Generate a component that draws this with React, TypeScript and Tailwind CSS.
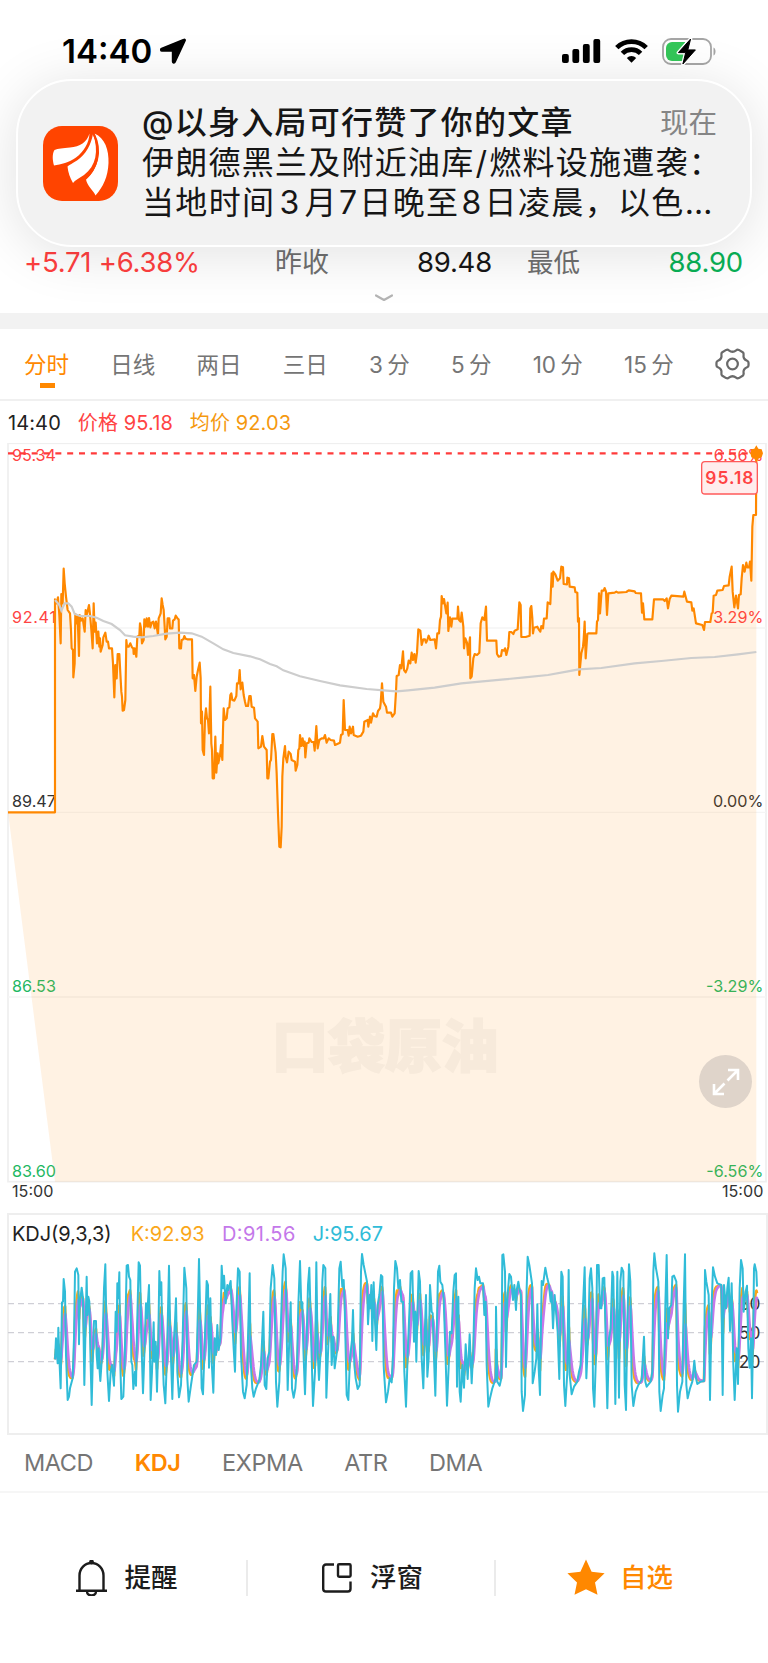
import clsx from 'clsx';

type Point = [number, number];

// Chart series are stored in thirds of a pixel, as "x,y" pairs
const PRICE =
  '24,1147 165,1147 165,508 170,520 174,502 178,555 182,640 184,492 188,520 191,416 194,460 198,500 203,540 210,550 213,600 215,655 219,660 220,742 224,700 226,552 230,580 233,560 237,678 239,555 243,572 248,565 254,605 257,540 261,552 267,525 270,552 274,600 278,655 281,520 284,605 287,578 291,640 295,605 298,650 300,625 302,665 308,645 310,622 316,608 320,635 324,635 327,655 336,655 339,700 343,802 346,705 350,745 353,672 358,672 361,730 364,785 366,800 368,842 372,840 376,810 379,630 381,650 386,650 391,640 396,652 400,655 401,672 404,655 409,680 412,620 418,616 420,580 423,595 426,640 431,630 433,568 437,590 440,565 444,590 447,564 451,592 455,578 460,575 464,595 468,575 474,615 476,565 482,550 485,505 488,525 491,540 494,590 496,628 500,620 503,565 508,565 510,595 517,595 519,572 524,568 527,557 533,566 536,568 538,655 543,655 545,630 550,628 553,618 557,626 562,628 576,628 578,745 582,735 586,783 590,740 594,720 599,698 602,745 603,880 606,845 608,960 612,975 615,865 618,835 621,865 624,870 627,910 631,770 634,940 636,960 638,1045 642,1045 646,920 649,1028 653,970 655,1000 660,975 663,945 667,990 669,900 671,835 675,870 680,865 683,835 688,832 691,795 694,790 697,810 703,812 709,798 711,760 716,760 719,720 722,778 727,758 731,795 735,815 738,828 744,828 748,798 752,798 755,830 762,833 765,865 773,875 775,955 783,950 787,918 792,950 800,960 802,1045 805,1045 810,995 813,990 817,912 820,912 823,935 827,968 830,1030 834,1150 838,1250 842,1252 845,1190 847,1040 850,985 855,948 857,980 861,997 866,965 872,972 875,990 885,995 887,1022 892,1005 895,960 898,955 900,915 904,948 908,925 911,948 914,935 916,982 920,940 926,938 928,925 935,936 941,936 944,962 949,888 953,955 958,930 965,925 971,925 975,915 980,938 986,925 992,930 1002,932 1005,945 1020,938 1023,915 1028,912 1031,810 1035,900 1043,900 1046,917 1049,890 1053,910 1059,890 1061,915 1073,920 1083,917 1090,905 1093,875 1103,870 1105,890 1110,860 1113,878 1119,850 1123,858 1130,860 1134,843 1140,835 1142,820 1146,760 1150,815 1158,830 1161,848 1173,848 1177,860 1184,850 1188,785 1190,738 1196,735 1200,705 1204,715 1209,664 1212,720 1217,727 1222,715 1226,692 1231,700 1235,668 1239,690 1243,672 1247,698 1251,668 1255,598 1261,602 1265,645 1270,628 1275,628 1278,638 1282,630 1286,617 1291,630 1304,628 1308,655 1312,610 1317,610 1320,570 1323,560 1325,498 1329,520 1332,507 1339,550 1343,518 1345,603 1350,562 1354,590 1357,566 1372,566 1374,530 1377,570 1382,575 1385,548 1390,590 1392,655 1396,625 1401,638 1404,675 1410,622 1411,745 1415,740 1420,685 1424,672 1431,675 1438,668 1442,580 1447,562 1453,570 1458,530 1461,632 1489,632 1491,672 1496,680 1503,678 1506,660 1512,662 1515,655 1519,675 1525,650 1528,606 1534,606 1540,612 1544,602 1553,598 1558,517 1562,525 1564,621 1577,621 1589,617 1591,535 1594,528 1597,565 1599,610 1602,593 1612,590 1616,598 1621,605 1624,588 1629,595 1632,566 1640,565 1643,517 1651,522 1655,430 1658,470 1660,425 1666,433 1673,452 1680,445 1684,410 1689,412 1691,462 1701,463 1702,443 1707,445 1709,470 1724,472 1726,486 1732,488 1734,575 1737,565 1738,735 1744,670 1749,650 1751,628 1754,575 1757,685 1762,612 1766,610 1789,610 1791,575 1794,570 1797,490 1800,550 1805,482 1811,482 1814,474 1818,485 1821,555 1825,490 1844,488 1849,485 1854,488 1879,486 1886,481 1904,484 1907,489 1923,490 1926,548 1929,520 1933,568 1957,568 1962,508 1989,508 1994,513 2000,505 2004,535 2009,507 2014,497 2050,500 2053,485 2061,515 2074,517 2077,542 2081,535 2088,580 2107,585 2112,600 2115,576 2131,576 2135,550 2138,548 2141,497 2148,495 2152,482 2168,480 2172,468 2186,466 2189,440 2195,410 2198,485 2203,532 2208,497 2214,535 2217,495 2222,493 2225,445 2229,405 2234,425 2239,398 2242,412 2247,412 2250,395 2254,452 2257,290 2260,255 2268,255 2269,70';

const AVERAGE =
  '165,510 178,525 184,542 194,520 205,520 215,530 224,552 240,558 270,558 290,563 310,573 335,582 360,600 375,616 400,620 425,622 460,618 500,611 540,608 575,610 605,620 640,640 670,658 700,669 750,679 780,688 810,702 830,709 850,721 900,739 960,753 1020,766 1100,777 1160,782 1190,784 1224,781 1304,773 1384,760 1504,749 1574,742 1644,735 1704,724 1736,718 1804,714 1904,700 1984,693 2074,684 2144,681 2214,673 2269,666';

const J_FIRST =
  '165,463 168,400 173,475 175,368 178,460 182,550 186,292 189,290 191,222 195,260 198,450 203,585 207,575 210,550 218,520 222,400 225,200 230,190 235,210 237,418 239,300 245,248 249,280 253,540 256,400 260,215 262,330 265,275 268,290 272,480 275,600 280,400 282,348 288,348 290,450 293,490 296,430 299,500 301,528 307,440 312,250 316,178 319,350 322,500 327,588 332,500 336,480 342,542 347,320 350,380 352,235 355,280 358,202 361,480 364,582 370,575 374,470 380,182 384,180 387,215 391,225 394,470 397,480 400,552 405,500 408,542 411,380 416,172 420,182 424,400 429,565 434,420 438,295 441,340 447,240 452,585 456,500 461,352 463,470 467,410 471,560 475,400 478,198 481,270 484,232 487,420 491,540 496,595 501,450 507,182 511,400 517,582 522,400 525,350 528,280 532,500 537,577 543,540 548,400 553,188 559,250 562,520 566,590 573,540 582,480 590,470 594,300 597,162 601,350 605,550 609,568 614,420 620,228 624,240 627,488 631,280 635,470 640,563 644,400 648,450 652,360 656,435 661,400 665,182 669,250 672,212 677,295 682,240 685,255 692,228 697,350 701,430 705,500 709,320 714,190 719,200 723,450 729,560 734,580 740,540 744,400 749,205 752,470 757,550 761,575 768,550 778,525 783,480 790,320 794,540 799,552 803,460 808,440 812,250 818,180 823,220 828,530 832,605 838,530 843,350 848,200 851,148 857,190 863,555 868,400 872,292 876,550 881,578 886,550 891,480 895,300 900,168 904,310 907,292 910,430 915,568 920,400 924,240 928,188 934,420 939,603 945,500 949,172 953,440 957,525 963,420 967,230 970,180 976,190 979,578 985,420 991,267 995,480 1000,395 1004,490 1012,430 1018,190 1022,170 1027,245 1031,225 1034,300 1040,570 1045,585 1050,460 1056,405 1059,315 1063,480 1067,520 1073,552 1079,540 1083,200 1086,147 1091,180 1101,230 1104,358 1109,270 1111,310 1114,240 1117,408 1121,232 1125,350 1129,435 1133,300 1138,270 1143,210 1147,215 1151,480';

const J_SECOND =
  '0,500 6,592 12,560 17,520 23,532 27,450 30,250 34,168 39,190 43,250 48,225 52,290 57,290 61,500 66,605 71,450 77,300 80,205 85,198 90,410 94,320 97,470 101,300 104,198 108,230 113,460 118,550 122,400 126,270 130,515 134,460 138,240 143,320 146,325 150,460 154,572 158,400 162,200 166,182 169,230 175,240 179,280 184,430 189,602 194,485 198,380 203,385 208,260 212,210 216,205 219,545 223,275 227,560 230,590 235,480 240,548 245,418 251,522 257,388 263,535 268,430 272,250 276,190 281,225 285,215 289,235 297,235 301,330 305,290 308,480 313,605 318,580 325,550 335,520 336,305 340,530 347,542 352,520 355,150 358,148 363,200 366,486 370,280 376,207 381,215 387,285 391,240 396,315 399,250 403,230 407,255 411,270 413,560 417,618 423,570 428,250 431,155 436,180 444,235 446,535 452,500 457,460 460,298 464,490 468,570 471,350 473,228 477,240 484,188 490,220 495,240 500,290 503,262 507,370 512,270 517,330 521,380 526,522 530,300 532,200 536,215 540,540 544,603 550,500 554,195 557,510 563,568 570,545 580,530 585,500 590,480 595,350 598,280 602,187 607,520 613,380 617,220 621,190 625,250 627,550 631,605 636,450 639,180 644,180 648,310 652,310 656,220 661,218 665,400 670,610 675,400 680,370 685,200 688,215 694,597 700,200 705,578 709,230 713,188 718,200 722,540 726,615 730,350 735,178 739,230 743,540 748,603 755,560 763,540 773,525 780,395 784,530 788,545 800,530 805,500 808,200 811,145 816,190 823,230 826,560 830,618 836,570 840,550 844,300 848,150 852,400 856,310 862,300 865,215 870,212 877,230 879,540 882,620 888,560 895,530 899,300 903,148 907,540 911,580 918,550 925,530 931,467 936,520 940,537 950,530 960,528 963,195 967,230 974,270 978,585 983,300 987,187 993,215 1000,235 1012,240 1016,570 1020,240 1026,310 1030,250 1034,218 1038,378 1043,235 1048,480 1052,585 1058,430 1062,537 1067,250 1071,165 1076,190 1079,320 1085,260 1089,242 1093,430 1097,488 1101,400 1104,580 1108,350 1110,190 1112,178 1117,200 1119,245';

function parse(series: string, dx = 0): Point[] {
  return series.split(' ').map((pair) => {
    const [x, y] = pair.split(',').map(Number);
    return [x + dx, y];
  });
}

const toPoints = (points: Point[]) => points.map((p) => p.join(',')).join(' ');

// J = 3K - 2D, D = 2/3 D' + 1/3 K, so K and D follow from the J series
function smooth(j: Point[]) {
  const k: Point[] = [];
  const d: Point[] = [];
  let prev = j[0][1];
  let i = 0;
  for (let x = j[0][0]; x <= j[j.length - 1][0]; x += 1.5) {
    while (i < j.length - 2 && j[i + 1][0] < x) i++;
    const [x0, y0] = j[i];
    const [x1, y1] = j[i + 1];
    const y = y0 + ((y1 - y0) * (x - x0)) / (x1 - x0);
    prev = (6 * prev + y) / 7;
    d.push([x, Math.round(prev)]);
    k.push([x, Math.round((y + 2 * prev) / 3)]);
  }
  return { k, d };
}

const jLine = [...parse(J_FIRST), ...parse(J_SECOND, 1152)];
const { k: kLine, d: dLine } = smooth(jLine);

const PERIODS = ['分时', '日线', '两日', '三日', '3 分', '5 分', '10 分', '15 分'];
const INDICATORS = ['MACD', 'KDJ', 'EXPMA', 'ATR', 'DMA'];

const AXIS = [
  { y: 93, price: '95.34', change: '6.56%', color: '#ff4343' },
  { y: 579, price: '92.41', change: '3.29%', color: '#ff4343' },
  { y: 1132, price: '89.47', change: '0.00%', color: '#333333' },
  { y: 1686, price: '86.53', change: '-3.29%', color: '#1fb864' },
  { y: 2241, price: '83.60', change: '-6.56%', color: '#1fb864' },
];

function StatusBar() {
  return (
    <div className="flex h-[102px] items-center justify-between pr-[51px] pl-[62px]">
      <div className="flex items-center gap-2">
        <span className="text-[33px] leading-none font-semibold text-black">14:40</span>
        <svg className="h-[26px] w-[26px]" viewBox="0 0 26 26">
          <path
            d="M23.8 1.4 1.6 10.6c-1.3.6-1 2.4.4 2.4h10.6v10.6c0 1.5 1.9 1.8 2.5.4L25 2.7c.4-.9-.3-1.7-1.2-1.3Z"
            stroke="#000"
            strokeWidth="1.6"
            strokeLinejoin="round"
          />
        </svg>
      </div>
      <div className="flex items-center gap-[14px]">
        <svg className="h-6 w-[39px]" viewBox="0 0 39 24">
          <rect x="0" y="15" width="6.8" height="9" rx="2" />
          <rect x="10.4" y="10" width="6.8" height="14" rx="2" />
          <rect x="20.9" y="5" width="6.8" height="19" rx="2" />
          <rect x="31.4" y="0" width="6.8" height="24" rx="2" />
        </svg>
        <svg className="h-6 w-[33px]" viewBox="0 0 33 24" fill="none" stroke="#000" strokeWidth="4.8">
          <path d="M1.8 8.6a21 21 0 0 1 29.4 0" />
          <path d="M7.4 14.4a13 13 0 0 1 18.2 0" />
          <path d="M16.5 23.8 11.8 19a6.8 6.8 0 0 1 9.4 0Z" fill="#000" stroke="none" />
        </svg>
        <svg className="h-[27px] w-[55px]" viewBox="0 0 55 27">
          <rect x="1" y="1" width="48" height="25" rx="8" fill="none" stroke="#a6a6a6" strokeWidth="1.8" />
          <path d="M51.5 9.5c2.7 1 2.7 7 0 8Z" fill="#a6a6a6" />
          <path d="M10 4h13v19H10a6 6 0 0 1-6-6v-7a6 6 0 0 1 6-6Z" fill="#34c759" />
          <path
            d="M28.6 1 16.4 14.6h7.3L20.9 26 33.4 11.9h-7.6Z"
            stroke="#fff"
            strokeWidth="3.6"
            strokeLinejoin="round"
          />
          <path d="M28.6 1 16.4 14.6h7.3L20.9 26 33.4 11.9h-7.6Z" stroke="#000" strokeLinejoin="round" />
        </svg>
      </div>
    </div>
  );
}

function NotificationBanner() {
  return (
    <div className="absolute top-[79px] right-4 left-4 flex h-[168px] items-center rounded-[56px] border-2 border-white bg-[#f2f2f2] pr-[33px] pl-[25px] shadow-[0_6px_56px_rgba(0,0,0,0.12)]">
      <svg className="h-[75px] w-[75px] shrink-0" viewBox="0 0 75 75">
        <rect width="75" height="75" rx="19" fill="#ff4400" />
        <g fill="#fff">
          <path d="M46.5 7.5C44 16 37 21 27 21.5C20 22 15 22.5 11.5 24C9 28 9.5 34 11 39.5C18 38.5 26 36.5 33 31.5C41 25.5 46 17 46.5 7.5Z" />
          <path d="M50 8C48 19 43 28 34 34.5C30 37 26 39 24.5 40.5C25 46 27 52 30 57C32 54 36 52.5 41 49C53 40 56 25 50 8Z" />
          <path d="M51.5 7.5C62 12 66 24 65.5 37C65 51 60 61 52.5 69.5C51 65 44 60 43 53.5C54 44 60 28 51.5 7.5Z" />
        </g>
        <path d="M50.5 7.5C60 26 53 43 42 53" fill="none" stroke="#ff4400" strokeWidth="2.2" />
      </svg>
      <div className="ml-6 min-w-0 flex-1 text-[32px] leading-10 whitespace-nowrap text-[#161616]">
        <div className="flex items-center justify-between">
          <span className="font-medium tracking-[1.25px]">@以身入局可行赞了你的文章</span>
          <span className="text-[28.5px] text-[#858585]">现在</span>
        </div>
        <div className="tracking-[1.25px]">
          伊朗德黑兰及附近油库<span className="mx-px">/</span>燃料设施遭袭：
        </div>
        <div className="tracking-[1.35px]">
          当地时间<span className="mx-[4px]">3</span>月<span className="mx-px">7</span>日晚至
          <span className="mx-[2px]">8</span>日凌晨，以色…
        </div>
      </div>
    </div>
  );
}

function QuoteRow() {
  return (
    <div className="flex h-[211px] flex-col justify-end">
      <div className="flex h-8 items-center pr-[25px] pl-6 text-[27.5px] whitespace-nowrap">
        <span className="w-[251px] tracking-[-0.25px] text-[#ff3f3f]">+5.71 +6.38%</span>
        <span className="text-[27px] text-[#6f6f6f]">昨收</span>
        <span className="w-[163px] text-right tracking-[-0.2px] text-[#161616]">89.48</span>
        <span className="ml-[35px] text-[26.5px] text-[#6f6f6f]">最低</span>
        <span className="flex-1 text-right tracking-[-0.2px] text-[#09b056]">88.90</span>
      </div>
      <div className="flex h-[34px] items-center justify-center">
        <svg className="mt-1 h-2 w-[18px]" viewBox="0 0 18 8" fill="none" stroke="#b4b4b4" strokeWidth="2.2">
          <path d="m1 1.5 8 4.5 8-4.5" strokeLinecap="round" strokeLinejoin="round" />
        </svg>
      </div>
    </div>
  );
}

function PeriodTabs() {
  return (
    <div className="flex h-[72px] items-center justify-between border-b-2 border-[#f0f0f0] pr-[18px] pl-6 text-[22.5px] text-[#757575]">
      {PERIODS.map((label, i) => (
        <div key={label} className={clsx('relative top-px [word-spacing:-2px]', i === 0 && 'text-[#ff8800]')}>
          {label}
          {i === 0 && <span className="absolute -bottom-[6px] left-4 h-[5px] w-[15px] bg-[#ff8800]" />}
        </div>
      ))}
      <svg className="h-9 w-[35px]" viewBox="0 0 36 36" fill="none" stroke="#6a6a6a" strokeWidth="2.3" strokeLinejoin="round">
        <path d="M11.5 3.5c1-.5 2-.3 2.8.4 2.2 1.8 5.2 1.8 7.4 0 .8-.7 1.8-.9 2.8-.4l4 2.4c.8.6 1.1 1.5.9 2.5-.5 2.9 1 5.3 3.6 6.3 1 .4 1.5 1.1 1.5 2.1v2.4c0 1-.5 1.7-1.5 2.1-2.6 1-4.1 3.4-3.6 6.3.2 1-.1 1.9-.9 2.5l-4 2.4c-1 .5-2 .3-2.8-.4-2.2-1.8-5.2-1.8-7.4 0-.8.7-1.8.9-2.8.4l-4-2.4c-.8-.6-1.1-1.5-.9-2.5.5-2.9-1-5.3-3.6-6.3-1-.4-1.500-1.1-1.500-2.1v-2.4c0-1 .5-1.7 1.5-2.1 2.6-1 4.1-3.4 3.6-6.3-.2-1 .1-1.9.9-2.5Z" />
        <circle cx="18" cy="18" r="5.5" />
      </svg>
    </div>
  );
}

function PriceChart() {
  return (
    <div className="relative">
      <svg className="block h-[770px] w-full" viewBox="0 39 2304 2310">
        <rect x="24" y="40" width="2274" height="2215" fill="none" stroke="#efefef" strokeWidth="5" />
        <path d="M24 594H2298M24 1147H2298M24 1701H2298" stroke="#f5f5f5" strokeWidth="4" />
        <g fontSize="48.5">
          {AXIS.map((row) => (
            <g key={row.price} fill={row.color}>
              <text x="36" y={row.y} textLength="132">
                {row.price}
              </text>
              <text x="2290" y={row.y} textAnchor="end">
                {row.change}
              </text>
            </g>
          ))}
          <g fill="#333">
            <text x="36" y="2301">
              15:00
            </text>
            <text x="2290" y="2301" textAnchor="end">
              15:00
            </text>
          </g>
        </g>
        <text
          x="1155"
          y="1911"
          textAnchor="middle"
          fontSize="170"
          fontWeight="900"
          fill="#000"
          stroke="#000"
          strokeWidth="5"
          opacity="0.03"
        >
          口袋原油
        </text>
        <polygon points={`${PRICE} 2269,2255 165,2255`} fill="#ff8800" fillOpacity="0.11" />
        <polyline points={PRICE} fill="none" stroke="#ff8800" strokeWidth="6.5" strokeLinejoin="round" />
        <polyline points={AVERAGE} fill="none" stroke="#cdcdcd" strokeWidth="6.5" />
        <path d="M24 70H2269" stroke="#ff3b3b" strokeWidth="7" strokeDasharray="18 17.5" />
        <path d="M2269 46l6 10 10 2 4 12-4 12-10 4-6 12-6-12-9-4-3-12 3-12 9-2Z" fill="#ff8800" />
        <rect x="2105" y="95" width="167" height="97" rx="10" fill="#ffeded" stroke="#ff5a5a" strokeWidth="4" />
        <text x="2188" y="162" textAnchor="middle" fontSize="52" fontWeight="600" fill="#ff4343" textLength="144">
          95.18
        </text>
      </svg>
      <button className="absolute right-4 bottom-[105px] flex h-[53px] w-[53px] items-center justify-center rounded-full bg-[#dfd4ca]">
        <svg className="h-7 w-7" viewBox="0 0 28 28" fill="none" stroke="#fff" strokeWidth="2.6">
          <path d="M16 2h10v10M26 2 15.5 12.5M12 26H2V16M2 26l10.5-10.5" />
        </svg>
      </button>
    </div>
  );
}

function KdjChart() {
  return (
    <svg className="block h-[222px] w-full" viewBox="0 24 2304 666">
      <rect x="24" y="27" width="2277" height="660" fill="none" stroke="#eeeeee" strokeWidth="6" />
      <g fontSize="60">
        <text x="36" y="107" fill="#222" textLength="299">
          KDJ(9,3,3)
        </text>
        <text x="392" y="107" fill="#faa71a" textLength="222">
          K:92.93
        </text>
        <text x="666" y="107" fill="#c478ea" textLength="220">
          D:91.56
        </text>
        <text x="938" y="107" fill="#30bcd8" textLength="211">
          J:95.67
        </text>
      </g>
      <path
        d="M24 296H2292M24 383H2292M24 470H2292"
        stroke="#cfcfd6"
        strokeWidth="4"
        strokeDasharray="18 12"
      />
      <g fontSize="52" fill="#333" textAnchor="end">
        <text x="2281" y="315">
          80
        </text>
        <text x="2281" y="402">
          50
        </text>
        <text x="2281" y="489">
          20
        </text>
      </g>
      <g fill="none" strokeLinejoin="round">
        <polyline points={toPoints(kLine)} stroke="#faa71a" strokeWidth="8" />
        <polyline points={toPoints(dLine)} stroke="#c478ea" strokeWidth="8" />
        <polyline points={toPoints(jLine)} stroke="#30bcd8" strokeWidth="6" />
      </g>
    </svg>
  );
}

function BottomBar() {
  return (
    <div className="grid h-[169px] grid-cols-3 items-center pr-6 text-[26.5px] font-medium text-[#1c1c1c]">
      <div className="flex h-9 items-center justify-center gap-[18px] border-r-2 border-[#ebebeb] pl-[7px]">
        <svg className="h-9 w-[31px]" viewBox="0 0 31 36" fill="none" stroke="#1c1c1c" strokeWidth="2.4">
          <path d="M3.5 30.5V15.5a12 12.5 0 0 1 24 0v15M0 30.8h31M11 31.5a4.5 4 0 0 0 9 0" />
          <circle cx="15.5" cy="2" r="1.2" fill="#1c1c1c" />
        </svg>
        <span>提醒</span>
      </div>
      <div className="flex h-9 items-center justify-center gap-[18px] border-r-2 border-[#ebebeb] pl-[3px]">
        <svg
          className="h-[30px] w-[30px]"
          viewBox="0 0 30 30"
          fill="none"
          stroke="#1c1c1c"
          strokeWidth="2.4"
          strokeLinejoin="round"
        >
          <path d="M12 1.5H4a2.8 2.8 0 0 0-2.8 2.8v21.4A2.8 2.8 0 0 0 4 28.5h21.7a2.8 2.8 0 0 0 2.8-2.8V18.5" />
          <rect x="16" y="1.2" width="12.6" height="12.6" rx="1.2" />
        </svg>
        <span>浮窗</span>
      </div>
      <div className="flex h-9 items-center justify-center gap-[15px] text-[#ff8800]">
        <svg className="h-9 w-[38px] -translate-y-px" viewBox="0 0 38 36" fill="#ff8800">
          <path d="m19 .5 5.6 12.2 13 1.6-9.6 9.2 2.5 12.3L19 30.2 7.500 35.8 10 23.5.4 14.3l13-1.6Z" />
        </svg>
        <span>自选</span>
      </div>
    </div>
  );
}

export default function App() {
  return (
    <div className="relative h-[1663px] w-[768px] overflow-hidden bg-white font-[Inter,'Noto_Sans_CJK_SC',sans-serif]">
      <StatusBar />
      <QuoteRow />
      <div className="h-4 bg-[#f2f2f2]" />
      <PeriodTabs />
      <div className="flex h-[42px] items-center gap-[17px] pt-px pl-2 text-[20px] tracking-[0.1px] text-[#222]">
        <span>14:40</span>
        <span className="text-[#ff4343]">价格 95.18</span>
        <span className="text-[#f5990f]">均价 92.03</span>
      </div>
      <PriceChart />
      <KdjChart />
      <div className="flex h-[58px] items-center gap-[41.5px] border-b-2 border-[#f6f6f6] pl-6 text-[23.5px] tracking-[-0.4px] text-[#757575]">
        {INDICATORS.map((name) => (
          <span key={name} className={clsx(name === 'KDJ' && 'font-semibold text-[#ff8800]')}>
            {name}
          </span>
        ))}
      </div>
      <BottomBar />
      <NotificationBanner />
    </div>
  );
}
